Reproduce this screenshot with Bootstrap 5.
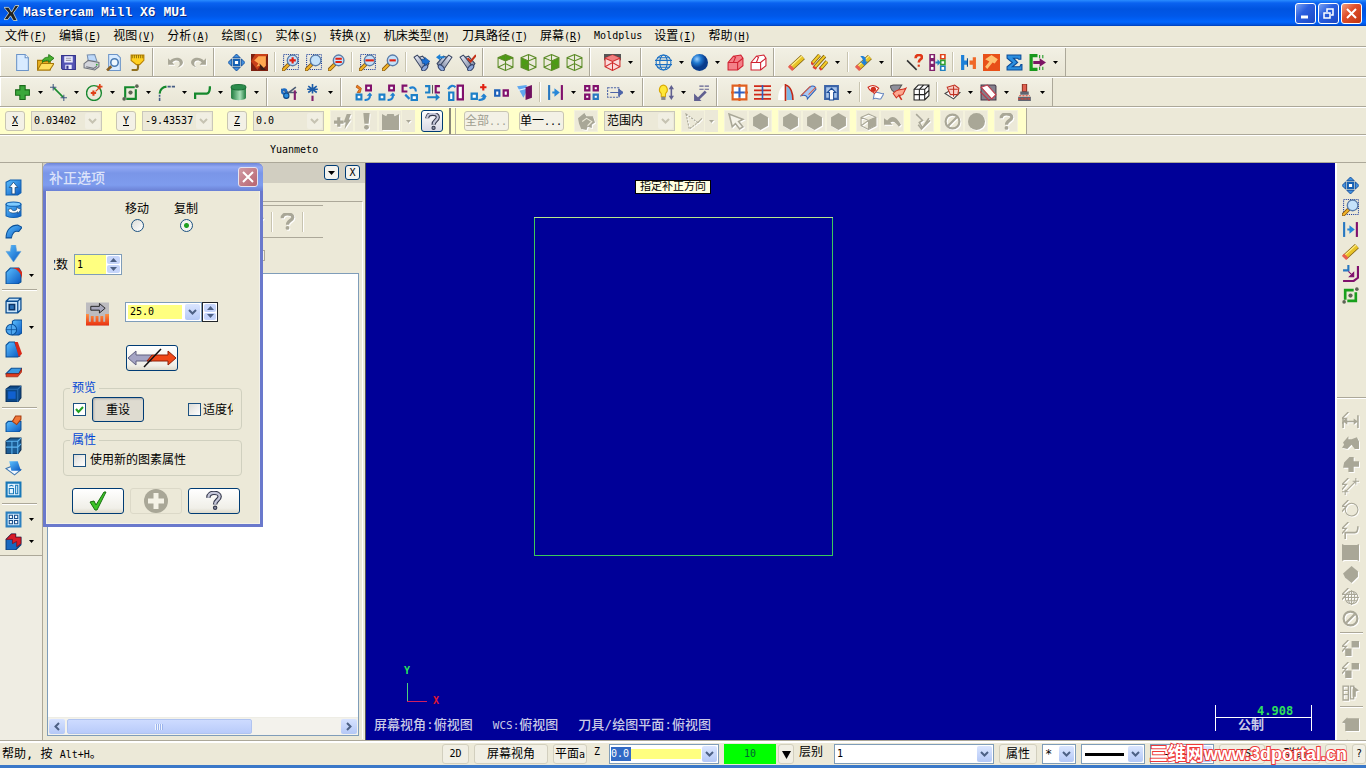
<!DOCTYPE html>
<html lang="zh-CN">
<head>
<meta charset="utf-8">
<meta name="viewport" content="width=device-width, initial-scale=1">
<title>Mastercam Mill X6 MU1</title>
<link href="https://cdn.jsdelivr.net/npm/bootstrap@5.3.0/dist/css/bootstrap.min.css" rel="stylesheet">
<style>
:root { --face:#ece9d8; --shade:#aca899; --ink:#000; --xp:#7f9db9; }
body { font-family:"DejaVu Sans Mono","Noto Sans CJK SC",monospace; font-size:12px; line-height:16px; color:#000; background:var(--face); }
.en { font-size:10px; }
button, input, select { font:inherit; color:inherit; }
button { padding:0; border:0; background:none; }
.titlebar { height:26px; background:linear-gradient(#2a8cff 0,#0a62f0 3px,#0054e0 9px,#0058ea 16px,#0066ff 22px,#0050d8 25px,#003cb0); color:#fff; }
.titlebar h1 { font:bold 13px/20px "Liberation Mono",monospace; text-shadow:1px 1px 0 #0a2a80; }
.titlebar .wins { gap:2px; }
.winbtn { width:21px; height:21px; border:1px solid #fff; border-radius:3px; background:linear-gradient(135deg,#7ba2f2,#2a5fe0 40%,#1c48c4); }
.winbtn.shut { background:linear-gradient(135deg,#f0a080,#e0502c 40%,#c03410); }
.winbtn svg, .x-shut svg { display:block; margin:auto; }
.menus { height:21px; padding-left:5px; gap:12px; border-bottom:1px solid var(--shade); }
.menus a { color:#000; text-decoration:none; white-space:nowrap; line-height:20px; display:block; }
.bar { border-top:1px solid #fff; border-bottom:1px solid var(--shade); height:30px; }
.tgroup { display:flex; align-items:center; border-left:1px solid #fff; border-right:1px solid var(--shade); padding:0 3px 0 10px; background:linear-gradient(#f2f0e4,#e8e5d4); }
.tb { width:23px; height:22px; flex:none; display:flex; align-items:center; justify-content:center; }
.tb svg { width:17px; height:17px; display:block; }
.cr { width:13px; height:22px; flex:none; display:flex; align-items:center; justify-content:center; }
.cr svg { width:5px; height:3px; }
.sp { width:8px; height:20px; flex:none; background:linear-gradient(90deg,transparent 3px,#c8c4b0 3px,#c8c4b0 4px,#fff 4px,#fff 5px,transparent 5px); }
.dis svg { color:#a9a797; filter:drop-shadow(1px 1px 0 #fff); }
.coords { height:28px; border-top:1px solid #fff; border-bottom:1px solid var(--shade); }
.ribbon { background:#ffffca; gap:14px; padding:0 8px 0 5px; border-right:1px solid var(--shade); }
.ribbon .segm { display:flex; gap:6px; align-items:center; }
.ribbon .seq { display:flex; }
.ribbon .tb { width:24px; background:var(--face); border:1px solid #f4f2dc; }
.ribbon .cr { background:var(--face); }
.ribbon .tb.lit { width:22px; background:linear-gradient(#fff,#d8d8e4); border:1px solid #003c74; border-radius:3px; }
.ribbon .split { width:7px; align-self:stretch; border-left:2px solid #8a887a; border-right:1px solid #b8b6a4; margin:0 -6px 0 -8px; }
.key { width:20px; height:20px; border:1px solid #c8c5b2; border-radius:3px; background:#f3f1e6; text-decoration:underline; font-size:10px; line-height:16px; }
.pick { width:45px; height:20px; border:1px solid #c8c5b2; border-radius:3px; background:#f3f1e6; text-align:left; white-space:nowrap; line-height:18px; }
.pick.dim { color:#a09e90; }
.combo { display:flex; height:20px; background:#fff; border:1px solid var(--xp); }
.combo input, .combo select { border:0; outline:0; background:none; min-width:0; width:20px; flex:1; padding:0 0 0 2px; appearance:none; border-radius:0; }
.combo input { font-size:10px; }
.combo input.yellow, .combo .yellow { background:#ffff80; }
.combo .drop { width:15px; margin:1px; border-radius:2px; background:linear-gradient(#dbe6ff,#b4c8f6); display:flex; align-items:center; justify-content:center; flex:none; }
.combo svg { width:9px; height:6px; color:#4d6185; }
.combo.off { background:var(--face); border-color:#c9c7ba; width:71px; }
.combo.off .drop { background:#f1efe3; }
.combo.off svg { color:#c6c3b2; }
.prompt { height:28px; border-top:1px solid #fff; border-bottom:1px solid var(--shade); padding-left:270px; line-height:26px; }
.stage { min-height:0; overflow:hidden; }
.rail { flex:none; border-right:1px solid var(--shade); display:flex; flex-direction:column; overflow:hidden; }
.rail .run { display:flex; align-items:center; height:22px; flex:none; }
.rail hr { margin:3px 0; height:0; border:0; border-top:1px solid var(--shade); border-bottom:1px solid #fff; opacity:1; flex:none; }
.rail.west { width:43px; background:#efede3; }
.rail.west .inner { padding:13px 5px 3px 2px; border-bottom:1px solid var(--shade); background:var(--face); }
.rail.east { width:31px; border:0; border-left:2px solid #fff; padding:11px 0 0 0; }
.rail.east .tb { width:26px; }
.rail.east hr { margin:3px 3px; }
.rail.east hr.brk { margin:91px 0 10px 0; }
.manager { width:323px; flex:none; border-right:1px solid #555; padding:0 2px 2px 3px; }
.manager .cap { height:20px; background:#d1cec1; margin:0 -2px 0 -3px; padding:2px 5px 0; gap:6px; }
.capbtn { width:15px; height:15px; border:1px solid #003c74; border-radius:3px; background:#f4f3ee; display:flex; align-items:center; justify-content:center; font-size:10px; line-height:12px; }
.sheet { margin-top:18px; border-top:1px solid var(--shade); border-right:1px solid #fff; padding:3px 3px 3px 1px; min-height:0; }
.strip { height:33px; width:276px; border-top:1px solid var(--shade); border-bottom:1px solid var(--shade); }
.slot { height:11px; width:218px; margin-top:12px; border:1px solid var(--shade); background:#f4f2e8; }
.tree { margin-top:12px; background:#fff; border:1px solid var(--xp); min-height:0; }
.sbar { height:18px; background:#f3f2ec; padding:1px; gap:2px; border-top:1px solid #eeede5; }
.sbar button { width:16px; border-radius:2px; background:linear-gradient(#d6e2ff,#b4c8f6); }
.sbar svg { width:6px; height:9px; display:block; margin:auto; color:#4d6185; }
.sbar .thumb { width:60%; background:linear-gradient(#cddbff,#b9cbfa); border:1px solid #b0c4f0; border-radius:2px; display:flex; align-items:center; justify-content:center; }
.sbar .grip { width:8px; height:6px; background:repeating-linear-gradient(90deg,#eef4ff 0 1px,#9cb4ec 1px 2px); }
.view { background:#000098; color:#c9c9e6; }
.view .sketch { position:absolute; inset:0; width:100%; height:100%; }
.hint { position:absolute; left:269px; top:17px; background:#ffffe1; color:#000; border:1px solid #000; font-size:11px; line-height:12px; padding:0 4px; }
.camera { position:absolute; left:8px; bottom:7px; font-size:13px; font-weight:500; white-space:nowrap; gap:20px; }
.camera .en { font-size:11px; }
.scalebar { position:absolute; right:23px; bottom:9px; width:97px; font-weight:700; }
.scalebar .num { color:#2fe05a; font:bold 12px/12px "DejaVu Sans Mono",monospace; padding-left:42px; }
.scalebar .unit { border-top:1px solid #fff; padding-left:23px; line-height:14px; font-size:13px; }
.scalebar::before, .scalebar::after { content:""; position:absolute; top:0; bottom:1px; width:1px; background:#fff; }
.scalebar::before { left:0; } .scalebar::after { right:0; }
.dlg { position:absolute; left:0; top:0; width:220px; background:var(--face); border:3px solid #6a79cc; border-top:0; border-radius:6px 6px 0 0; z-index:5; box-shadow:inset 0 0 0 1px #f4f2e8; }
.dlg header { height:28px; margin:0 -3px; padding:0 5px 0 6px; border-radius:6px 6px 0 0; background:linear-gradient(#6b83d8,#93a9f4 4px,#7a96e8 10px,#7e9cee 22px,#6a80d4); color:#dbe2fa; }
.dlg h2 { font:500 14px/27px "Noto Sans CJK SC",sans-serif; margin:0; }
.x-shut { width:20px; height:20px; border:1px solid #e6e2ef; border-radius:3px; background:linear-gradient(135deg,#d09aa4,#b86470); }
.dlg input[type=radio], .dlg input[type=checkbox] { appearance:none; width:13px; height:13px; border:1px solid #1c5180; background:linear-gradient(135deg,#dcdcd7,#fff); margin:0; flex:none; }
.dlg input[type=radio] { border-radius:50%; }
.dlg input[type=radio]:checked { background:radial-gradient(circle,#21a121 0 2px,#f4f4f0 3px); }
.dlg input[type=checkbox]:checked { background:#fff url("data:image/svg+xml,%3Csvg xmlns='http://www.w3.org/2000/svg' viewBox='0 0 11 11'%3E%3Cpath d='M2 5l2.500 3L9 3' fill='none' stroke='%2321a121' stroke-width='2'/%3E%3C/svg%3E"); }
.modes { padding:10px 0 0 79px; gap:25px; }
.modes label { display:flex; flex-direction:column; align-items:center; gap:2px; }
.times { margin:22px 0 0 8px; gap:6px; }
.times label { width:14px; overflow:hidden; display:flex; justify-content:flex-end; }
.times label span { flex:none; white-space:nowrap; }
.times .combo { width:48px; height:21px; }
.spin { display:flex; flex-direction:column; width:15px; gap:1px; padding:1px; flex:none; }
.spin button { flex:1; background:#c6d5fa; border-radius:2px; line-height:0; }
.spin svg { width:7px; height:4px; color:#4d6185; }
.off-row { margin:27px 0 0 40px; padding-right:42px; }
.off-row .dist { width:77px; flex:none; }
.dist .yellow { margin:2px; }
.off-row .dspin { width:16px; }
.dspin .spin { width:14px; }
.push { width:52px; height:26px; border:1px solid #003c74; border-radius:3px; background:linear-gradient(#fff,#f0efe8 80%,#dedacb); display:flex; align-items:center; justify-content:center; }
.push.flat { border-color:#dcd9c8; background:var(--face); color:#a9a797; }
.flip { margin:19px 0 10px 80px; }
.dlg fieldset { border:1px solid #d0d0bf; border-radius:4px; margin:0 18px 0 17px; padding:0 8px 0 9px; }
.dlg legend { float:none; width:auto; margin:0 0 0 -3px; padding:0 3px 0 2px; font-size:12px; line-height:14px; color:#0046d5; }
.dlg .fs1 { height:49px; }
.dlg .fs2 { height:43px; margin-top:3px; }
.fs1 > div { margin-top:2px; }
.fs2 > label { margin-top:5px; }
.push.reset { margin-left:6px; background:#dedbd0; box-shadow:inset 1px 1px 2px #aaa; height:25px; }
.fitlb { width:45px; overflow:hidden; white-space:nowrap; }
.fitlb span { padding-left:2px; }
.acts { gap:6px; margin:12px 0 10px 26px; }
.foot { border-top:2px solid #fff; border-bottom:3px solid #3a78c8; box-shadow:0 -1px 0 var(--shade); height:27px; white-space:nowrap; }
.foot .tip { padding-left:2px; }
.foot .cell { height:20px; border:1px solid #d2cfbe; border-radius:3px; background:#f1efe4; line-height:18px; overflow:hidden; text-align:center; }
.state { gap:5px; height:20px; }
.w2d { width:27px; } .wview { width:74px; } .wplane { width:34px; } .wz { width:12px; padding-left:2px; }
.wdepth { width:110px; }
.combo input.sel { flex:none; width:20px; background:#316ac5; color:#fff; margin:2px 0 2px 1px; padding:0; }
.wcol { width:52px; background:#0f0; color:#063; } .wcr { width:16px; margin-left:-3px; }
.wlev { width:30px; } .wlevel { width:160px; }
.watt { width:38px; } .wpt { width:34px; } .wln { width:64px; align-items:center; }
.combo.wpt input { font-size:12px; }
.wln .drop { align-self:stretch; }
.stroke3, .stroke1 { flex:1; margin:0 3px; height:3px; background:#000; } .stroke1 { height:1px; }
.wwcs { width:46px; } .wgrp { width:50px; } .wq2 { width:22px; } .wq { width:14px; }
.site-url { position:absolute; right:19px; bottom:0; font:bold 18px/22px "Liberation Sans","Noto Sans CJK SC",sans-serif; color:#fff; -webkit-text-stroke:2px #ee3a3a; paint-order:stroke fill; text-decoration:none; }
</style>
</head>
<body class="vh-100 d-flex flex-column overflow-hidden">

<svg width="0" height="0" class="position-absolute" aria-hidden="true">
<defs>
<linearGradient id="gb" x2="1" y2="1"><stop stop-color="#5cc0ff"/><stop offset="1" stop-color="#0a58c0"/></linearGradient>
<radialGradient id="gs" cx=".35" cy=".3"><stop stop-color="#9cd0ff"/><stop offset=".5" stop-color="#2078d0"/><stop offset="1" stop-color="#0a3c8c"/></radialGradient>
<linearGradient id="gg"><stop stop-color="#1c7a3c"/><stop offset=".6" stop-color="#a8e0b8"/><stop offset="1" stop-color="#1c7a3c"/></linearGradient>
<linearGradient id="gm" x2="1" y2="1"><stop stop-color="#f4f6ff"/><stop offset="1" stop-color="#6c7896"/></linearGradient>
<linearGradient id="gr" x2="0" y2="1"><stop stop-color="#ff9040"/><stop offset="1" stop-color="#e83010"/></linearGradient>
</defs>
<symbol id="caret" viewBox="0 0 5 3"><path d="M0 0h5L2.500 3z" fill="currentColor"/></symbol>
<symbol id="chev" viewBox="0 0 9 6"><path d="M1 1l3.500 3.500L8 1" fill="none" stroke="currentColor" stroke-width="2"/></symbol>
<symbol id="up" viewBox="0 0 7 4"><path d="M0 4h7L3.500 0z" fill="currentColor"/></symbol>
<symbol id="dn" viewBox="0 0 7 4"><path d="M0 0h7L3.500 4z" fill="currentColor"/></symbol>
<symbol id="lens" viewBox="0 0 16 16"><path d="M1.500 14.500l4.500-4.500" stroke="#8a5a10" stroke-width="3.500" stroke-linecap="round"/><path d="M1.500 14.500l4-4" stroke="#f0b428" stroke-width="2" stroke-linecap="round"/><circle cx="10" cy="6" r="5" fill="#c4e2fa" stroke="#5a7ca8" stroke-width="1.300"/></symbol>
<symbol id="new" viewBox="0 0 16 16"><path d="M2.500.5h8l3 3v12h-11z" fill="#d8ebff" stroke="#6c94c8"/><path d="M10.500.5v3h3" fill="#fff" stroke="#6c94c8"/></symbol>
<symbol id="open" viewBox="0 0 16 16"><path d="M.5 15V6h5l1 1h6v8z" fill="#e8b020" stroke="#a87808"/><path d="M.5 15L4 9h12l-4 6z" fill="#ffe060" stroke="#a87808"/><path d="M5 8c0-4 3-5 6-5V.5L16 4l-5 4V6C9 6 7 6 5 8z" fill="#48b030" stroke="#1c7010" stroke-width=".8"/></symbol>
<symbol id="save" viewBox="0 0 16 16"><path d="M1.500 1.500h13v13h-12l-1-1z" fill="#5454b4" stroke="#34348c"/><path d="M4 2h8v6H4zM5 10h6v4H5z" fill="#eef"/><path d="M5.500 4h5M5.500 6h5" stroke="#99a"/><path d="M6 11h2v3H6z" fill="#34348c"/></symbol>
<symbol id="print" viewBox="0 0 16 16"><path d="M5 7L4 1l7-.5 2 6z" fill="#bcd8fa" stroke="#7890b0"/><path d="M1 9l4-3 10 2v4l-4 3-10-2z" fill="#d4d6dc" stroke="#70747c"/><path d="M3 12l7 1.500 3-2" stroke="#70747c" fill="none"/><circle cx="13" cy="10" r=".8" fill="#2a2"/></symbol>
<symbol id="preview" viewBox="0 0 16 16"><path d="M2.500.5h8l3 3v12h-11z" fill="#d8ebff" stroke="#6c94c8"/><circle cx="8" cy="8" r="3.500" fill="#eef8ff" stroke="#4c7cb4" stroke-width="1.500"/><path d="M1 15.500l4-4" stroke="#8a6020" stroke-width="2.500"/></symbol>
<symbol id="config" viewBox="0 0 16 16"><path d="M2 1h12v5l-4 4H7L2 6z" fill="#ffd020" stroke="#b88000"/><path d="M3 1v3M5 1v3M7 1v3M9 1v3M11 1v3M13 1v3" stroke="#806000" stroke-width=".8"/><path d="M8.500 10v3c0 3-3 2-6 2" stroke="#907020" stroke-width="2" fill="none"/></symbol>
<symbol id="undo" viewBox="0 0 16 16"><path d="M1 4v6h6L5 8c3-3 7-2 7 1 0 2-1 3-3 4 4-1 6-3 6-5 0-5-8-6-12-2z" fill="currentColor"/></symbol>
<symbol id="redo" viewBox="0 0 16 16"><path d="M15 4v6H9l2-2C8 5 4 6 4 9c0 2 1 3 3 4-4-1-6-3-6-5 0-5 8-6 12-2z" fill="currentColor"/></symbol>
<symbol id="fit" viewBox="0 0 16 16"><path d="M8 0l3.500 3.500h-7zM8 16l3.500-3.500h-7zM0 8l3.500-3.500v7zM16 8l-3.500-3.500v7z" fill="#4090e0" stroke="#0a4494" stroke-width=".8"/><path d="M5.500 5.500h5v5h-5z" fill="#fff" stroke="#1460b4" stroke-width="2"/></symbol>
<symbol id="repaint" viewBox="0 0 16 16"><path d="M0 0h16v16H0z" fill="#7c2010"/><path d="M0 7L4 0h12L6 15z" fill="#c84018"/><path d="M3 6l4-4 7 0v9l-3 3-3-3-3 1 2-3z" fill="#ffa850"/><path d="M8 9l6 6h-5z" fill="#3c1c14"/></symbol>
<symbol id="zwin" viewBox="0 0 16 16"><path d="M1.500.5h14v14h-14z" fill="none" stroke="#1a3c9c" stroke-dasharray="1 1"/><use href="#lens"/><path d="M10 3v6M7 6h6" stroke="#e02010" stroke-width="2"/></symbol>
<symbol id="ztgt" viewBox="0 0 16 16"><path d="M1.500.5h14v14h-14z" fill="none" stroke="#1a3c9c" stroke-dasharray="1 1"/><use href="#lens"/></symbol>
<symbol id="zeq" viewBox="0 0 16 16"><use href="#lens"/><path d="M7 4.500h6M7 7.500h6" stroke="#e02010" stroke-width="2"/></symbol>
<symbol id="zhalf" viewBox="0 0 16 16"><path d="M1.500.5h14v14h-14z" fill="none" stroke="#1a3c9c" stroke-dasharray="1 1"/><use href="#lens"/><path d="M6 6h8" stroke="#e02010" stroke-width="2"/></symbol>
<symbol id="zout" viewBox="0 0 16 16"><use href="#lens"/><path d="M7 6h6" stroke="#e02010" stroke-width="2"/></symbol>
<symbol id="binocle" viewBox="0 0 16 16"><path d="M1 3l3-2 9 9-4 5z" fill="url(#gm)" stroke="#3c4864"/><path d="M6 3l3-1 6 7-2 3z" fill="url(#gm)" stroke="#3c4864"/><ellipse cx="11" cy="13" rx="3.500" ry="2" transform="rotate(-45 11 13)" fill="#8ca8dc" stroke="#34446c"/></symbol>
<symbol id="bin1" viewBox="0 0 16 16"><use href="#binocle"/><path d="M8 5h3V3l5 4-5 4V9H9z" fill="#1c70d4" stroke="#0a3c80" stroke-width=".5"/></symbol>
<symbol id="bin2" viewBox="0 0 16 16"><g transform="matrix(-1 0 0 1 16 0)"><use href="#binocle"/></g><path d="M0 3l4-3v2h4v2H4v2z" fill="#1c80d4"/></symbol>
<symbol id="bin3" viewBox="0 0 16 16"><use href="#binocle"/><path d="M8 4l3 3 5-6" fill="none" stroke="#c43018" stroke-width="2"/></symbol>
<symbol id="cubew" viewBox="0 0 16 16"><path d="M8 .5l7 3v9l-7 3-7-3v-9zM1 3.500l7 3 7-3M8 6.500v9M8 .5V9M1 12.500L8 9l7 3.500" fill="none" stroke="#5c8c28"/></symbol>
<symbol id="cubet" viewBox="0 0 16 16"><path d="M8 .5l7 3-7 3-7-3z" fill="#4c9c14"/><use href="#cubew"/></symbol>
<symbol id="cubef" viewBox="0 0 16 16"><path d="M1 3.500l7 3v9l-7-3z" fill="#4c9c14"/><use href="#cubew"/></symbol>
<symbol id="cubes" viewBox="0 0 16 16"><path d="M15 3.500l-7 3v9l7-3z" fill="#4c9c14"/><use href="#cubew"/></symbol>
<symbol id="cuber" viewBox="0 0 16 16"><path d="M0 0h16v6H0z" fill="#555"/><path d="M8 1l7 3v8l-7 3.500L1 12V4z" fill="#fbdcdc" stroke="#d02c2c"/><path d="M8 1l7 3-7 3-7-3z" fill="#f08080"/><path d="M1 4l7 3 7-3M8 7v8M1 12l7-4 7 4" fill="none" stroke="#d02c2c"/></symbol>
<symbol id="globe" viewBox="0 0 16 16"><g fill="none" stroke="#1c70c4"><circle cx="8" cy="8" r="7"/><ellipse cx="8" cy="8" rx="3.500" ry="7"/><path d="M0 6h16M0 10h16M2 3.500h12M2 12.500h12"/></g></symbol>
<symbol id="ball" viewBox="0 0 16 16"><circle cx="8" cy="8" r="8" fill="url(#gs)"/></symbol>
<symbol id="rbox" viewBox="0 0 16 16"><path d="M1 8l5-6 7-1 2 3v7l-5 4H1z" fill="#f48088" stroke="#d02030"/><path d="M1 8h9l5-4M10 8v7M6 2l2 1-2 5" fill="none" stroke="#d02030"/></symbol>
<symbol id="rboxw" viewBox="0 0 16 16"><path d="M1 8l5-6 7-1 2 3v7l-5 4H1z" fill="#fff" stroke="#d02030"/><path d="M1 8h9l5-4M10 8v7M6 2l2 1-2 5" fill="none" stroke="#d02030"/></symbol>
<symbol id="erase" viewBox="0 0 16 16"><path d="M3 13L14 3" stroke="#806010" stroke-width="5.500"/><path d="M3 13L14 3" stroke="#e8c428" stroke-width="4"/><path d="M2 12l11-10" stroke="#fff090" stroke-width="1"/><path d="M1 11l4 4" stroke="#e86050" stroke-width="3"/></symbol>
<symbol id="erase2" viewBox="0 0 16 16"><path d="M1 9l7-8M3 13L13 2M9 14l6-7" stroke="#806010" stroke-width="3.500"/><path d="M1 9l7-8M3 13L13 2M9 14l6-7" stroke="#f4cc28" stroke-width="2"/><path d="M0 8l2 2M2 12l3 2M8 13l2 2" stroke="#e04030" stroke-width="2"/></symbol>
<symbol id="erase3" viewBox="0 0 16 16"><use href="#erase"/><path d="M5 2c4-1 6 2 5 5h2l-3 4-4-4h2c1-2 0-3-2-5z" fill="#2080d8"/></symbol>
<symbol id="anlz" viewBox="0 0 16 16"><path d="M1 6l9 9" stroke="#333" stroke-width="1.500"/><path d="M9 4c0-4 6-4 6-1 0 2-3 2-3 5" fill="none" stroke="#e03818" stroke-width="2.500"/><path d="M11 10h2v2h-2z" fill="#e03818"/></symbol>
<symbol id="diff" viewBox="0 0 16 16"><path d="M1 .5h4v4H1zM1 6h4v4H1zM1 11.500h4v4H1z" fill="#fff" stroke="#80206c" stroke-width="1.500"/><path d="M11 .5h4v4h-4z" fill="#fff" stroke="#e04018" stroke-width="1.500"/><path d="M11 6h4v4h-4z" fill="#fff" stroke="#30a030" stroke-width="1.500"/><path d="M11 11.500h4v4h-4z" fill="#fff" stroke="#2080c0" stroke-width="1.500"/><path d="M6 7h2V5l3 3-3 3V9H6z" fill="#2080c0"/></symbol>
<symbol id="joint" viewBox="0 0 16 16"><path d="M1 1h3v5h3v4H4v5H1z" fill="#1c80d8"/><path d="M15 3h-3v3H9v4h3v4h3z" fill="#f06828"/><path d="M7 4v8" stroke="#0a4c90"/></symbol>
<symbol id="hammer" viewBox="0 0 16 16"><path d="M0 0h16v16H0z" fill="#e85018"/><path d="M2 5l6-4 6 4-3 4-2-1-5 6-2-2 4-5z" fill="#ffc070"/></symbol>
<symbol id="sigma" viewBox="0 0 16 16"><path d="M1 1h13v4h-2l-1-1H7l4 4-5 4h7l1-2h1v5H1v-3l5-4-5-4z" fill="#2c90e0" stroke="#0a4c98"/></symbol>
<symbol id="port" viewBox="0 0 16 16"><path d="M8 1.500H2v13h6" fill="none" stroke="#18981c" stroke-width="3"/><path d="M10 1v3M13 1v3M10 12v3M13 12v3" stroke="#18981c"/><path d="M4 6.500h6V4l6 4-6 4V9.500H4z" fill="#7c1464"/></symbol>
<symbol id="plus" viewBox="0 0 16 16"><path d="M5.500 1.500h5v4h4v5h-4v4h-5v-4h-4v-5h4z" fill="#3ca83c" stroke="#1c6c1c"/></symbol>
<symbol id="line" viewBox="0 0 16 16"><path d="M3 3l10 10" stroke="#1c8c30" stroke-width="1.500"/><path d="M3 0v6M0 3h6M13 10v6M10 13h6" stroke="#445c84"/></symbol>
<symbol id="arc" viewBox="0 0 16 16"><circle cx="7.500" cy="8.500" r="7" fill="none" stroke="#188830" stroke-width="1.300"/><path d="M7 6v5M4.500 8.500h5" stroke="#e04018" stroke-width="2"/><path d="M13 0v5M10.500 2.500h5" stroke="#e04018" stroke-width="1.500"/><path d="M9 7l3-3" stroke="#e04018"/></symbol>
<symbol id="rect" viewBox="0 0 16 16"><path d="M12 3H3v10M4 14h9V5" fill="none" stroke="#14882c" stroke-width="2"/><g fill="#5c6454"><circle cx="2" cy="14" r="1.700"/><circle cx="14" cy="2" r="1.700"/><circle cx="8" cy="8" r="2"/></g></symbol>
<symbol id="fillet" viewBox="0 0 16 16"><path d="M1.500 16V10" stroke="#445c84" stroke-width="1.500" stroke-dasharray="3 1"/><path d="M1.500 9C2 5 4 3 8 2.500" fill="none" stroke="#14882c" stroke-width="2"/><path d="M9 2.500h7" stroke="#445c84" stroke-width="1.500" stroke-dasharray="3 1"/></symbol>
<symbol id="spline" viewBox="0 0 16 16"><path d="M1 14V9h11c2 0 3-2 3-7" fill="none" stroke="#14882c" stroke-width="2.200"/></symbol>
<symbol id="cyl" viewBox="0 0 16 16"><path d="M1 3v10c0 3 14 3 14 0V3z" fill="url(#gg)"/><ellipse cx="8" cy="3" rx="7" ry="2.500" fill="#2c8c4c" stroke="#1c7038"/></symbol>
<symbol id="trim" viewBox="0 0 16 16"><path d="M0 5l7 3M6 9l8-6M7 8h8" fill="none" stroke="#4c5c74" stroke-width="1.500"/><circle cx="3" cy="7" r="2" fill="none" stroke="#1c6cc4" stroke-width="2"/><circle cx="5" cy="11" r="2.500" fill="#2c90e0" stroke="#0a4484"/><path d="M13 6v9" stroke="#80206c" stroke-width="2"/></symbol>
<symbol id="brk" viewBox="0 0 16 16"><path d="M8 0v9M4 2l8 6M12 2L4 8M3 5h10" stroke="#1c5ca8" stroke-width="1.500"/><path d="M8 11v5" stroke="#80206c" stroke-width="2"/></symbol>
<symbol id="xf" viewBox="0 0 16 16"><path d="M1.500 10h4.500v4.500H1.500z" fill="#fff" stroke="#1c80c8" stroke-width="2"/><path d="M10.500 1.500h4.500V6h-4.500z" fill="#fff" stroke="#80106c" stroke-width="2"/><path d="M9 14c3 0 4-1 4-3h-2l3-3 2.500 3H15c0 4-3 5-6 5z" fill="#2080d0"/></symbol>
<symbol id="xf1" viewBox="0 0 16 16"><use href="#xf"/><path d="M2 1l4 3-1 4H2l2-3-3-2z" fill="#f08020" stroke="#a04000" stroke-width=".6"/></symbol>
<symbol id="xf2" viewBox="0 0 16 16"><path d="M6 1.500H1.500V7H6" fill="none" stroke="#80106c" stroke-width="2"/><path d="M10 10.500h5V15h-5z" fill="#fff" stroke="#1c80c8" stroke-width="2"/><path d="M8 4c4-2 6 0 6 3M4 10l4 4" stroke="#2080d0" stroke-width="2" fill="none"/></symbol>
<symbol id="xf3" viewBox="0 0 16 16"><path d="M15 2h-4v6h4" fill="none" stroke="#80106c" stroke-width="2"/><path d="M1 2h4v6H1M3 12.500h9" fill="none" stroke="#1c80c8" stroke-width="2"/><path d="M11 9l4 3.500-4 3.500z" fill="#1c80c8"/><path d="M8 1v8" stroke="#555"/></symbol>
<symbol id="xf4" viewBox="0 0 16 16"><path d="M10 1.500h5v13h-5z" fill="#fff" stroke="#80106c" stroke-width="2"/><path d="M2 8h4v7H2z" fill="#fff" stroke="#1c80c8" stroke-width="2"/><path d="M1 5c2-4 5-4 7-2" stroke="#2080d0" stroke-width="2" fill="none"/></symbol>
<symbol id="xf5" viewBox="0 0 16 16"><path d="M1.500 9h5v5h-5z" fill="#fff" stroke="#1c80c8" stroke-width="2"/><path d="M12.500 0v6M9.500 3h6" stroke="#e02010" stroke-width="2"/><path d="M8 14c3 0 4-1 4-2h-2l3-3 3 3h-1c0 3-3 4-7 4z" fill="#2080d0"/></symbol>
<symbol id="xf6" viewBox="0 0 16 16"><path d="M2 6h4v5H2z" fill="#fff" stroke="#1c60b8" stroke-width="2"/><path d="M10 6h4v5h-4z" fill="#fff" stroke="#80106c" stroke-width="2"/></symbol>
<symbol id="xf7" viewBox="0 0 16 16"><path d="M1 2l9-1v6L7 13z" fill="#60a8f0"/><path d="M2 6l8-2" stroke="#e4f0ff"/><path d="M9 3l6-2v12l-6 2z" fill="#701060"/></symbol>
<symbol id="dyn" viewBox="0 0 16 16"><path d="M2 1v14" stroke="#2878c0" stroke-width="2"/><path d="M14 1v14" stroke="#80106c" stroke-width="2"/><path d="M5 7h2V4l5 4-5 4V9H5z" fill="#2888d8"/></symbol>
<symbol id="arr" viewBox="0 0 16 16"><path d="M2 2h4v4H2zM10 2h4v4h-4zM2 10h4v4H2z" fill="#fff" stroke="#80106c" stroke-width="2"/><path d="M10 10h4v4h-4z" fill="#fff" stroke="#2878c0" stroke-width="2"/></symbol>
<symbol id="mov" viewBox="0 0 16 16"><path d="M1.500 3.500h11v9h-11z" fill="none" stroke="#4c64a8" stroke-dasharray="2 1"/><path d="M4 8h8M12 5l4 3-4 3z" fill="#4c64a8" stroke="#4c64a8"/></symbol>
<symbol id="bulb" viewBox="0 0 16 16"><path d="M6 1a4.500 4.500 0 0 1 2 8v3H4V9a4.500 4.500 0 0 1 2-8z" fill="#ffe838" stroke="#d8a800"/><path d="M4 12h4v3H4z" fill="#888"/><path d="M13.500 3v10" stroke="#606090" stroke-width="1.500"/><path d="M11 5l2.500-4L16 5zM11 11l2.500 4 2.500-4z" fill="#606090"/></symbol>
<symbol id="note" viewBox="0 0 16 16"><path d="M6 2h10M6 5h10" stroke="#606090" stroke-dasharray="4 1"/><path d="M12 7l-7 7" stroke="#606090" stroke-width="2.500"/><path d="M1 16V9l7 7z" fill="#606090"/></symbol>
<symbol id="gridr" viewBox="0 0 16 16"><path d="M1.500 1.500h13v13h-13z" fill="#fff" stroke="#e06020" stroke-width="2"/><path d="M8 3v10M3 8h10" stroke="#3060c0" stroke-width="2"/><path d="M8 0v3M8 13v3M0 8h3M13 8h3" stroke="#e06020" stroke-width="2"/></symbol>
<symbol id="flow" viewBox="0 0 16 16"><path d="M0 2h16M0 6h16M0 10h16M0 14h16" stroke="#d02818" stroke-width="1.500"/><path d="M8 1v14" stroke="#3060c0" stroke-width="1.500"/></symbol>
<symbol id="sail" viewBox="0 0 16 16"><path d="M7 1C2 4 1 9 1 15h6z" fill="#fff"/><path d="M9 1v14h6c0-6-2-11-6-14z" fill="#7cb8e8"/><path d="M8 0v16M8 1c5 1 7 8 7 14" fill="none" stroke="#c02818" stroke-width="1.500"/></symbol>
<symbol id="swept" viewBox="0 0 16 16"><path d="M1 11l8-8c3-2 6-1 6 2l-8 9c0-3-2-4-6-3z" fill="#a8c8f4" stroke="#2c60b8"/><path d="M1 11l9-9M8 10l7-7" stroke="#e06040"/></symbol>
<symbol id="pocket" viewBox="0 0 16 16"><path d="M2 2h12v12H2z" fill="#a8c4ea" stroke="#3c64a8" stroke-width="2"/><path d="M8 4l4 4h-2v7H6V8H4z" fill="#fff" stroke="#1c4c98"/></symbol>
<symbol id="surf1" viewBox="0 0 16 16"><path d="M7 8c4-1 6 2 9 1l-3 5c-2 1-4-2-7 0z" fill="#fff" stroke="#6888c0"/><path d="M1 3c3-2 7-2 10 1l-4 5c-2-3-4-1-6-6z" fill="#fff" stroke="#d03020"/><circle cx="6" cy="5" r="2.500" fill="#d03020"/></symbol>
<symbol id="surf2" viewBox="0 0 16 16"><path d="M0 2l3-1h8l-5 8-4-3z" fill="#90909c" stroke="#555"/><path d="M3 9c3-5 8-3 12-5l-3 6c-2 1-4 0-6 3z" fill="#fca890" stroke="#d03020"/><path d="M8 10l3 5" stroke="#d03020" stroke-width="1.500"/></symbol>
<symbol id="box" viewBox="0 0 16 16"><path d="M1 5l4-4h10v10l-4 4H1zM1 5h10v10M11 5l4-4M6 5v10M1 10h10l4-4M10 1L6 5" fill="#fff" stroke="#222" stroke-width="1"/></symbol>
<symbol id="surf3" viewBox="0 0 16 16"><path d="M1 9l5-3 9 2-6 6z" fill="#fff" stroke="#444"/><path d="M3 3l7-2 4 3-1 6H6z" fill="#f8d0c8" stroke="#c03020"/><path d="M5 5h8M9 2v10" stroke="#c03020"/></symbol>
<symbol id="blk" viewBox="0 0 16 16"><path d="M1 1h13l1 1v13H1z" fill="#84808c" stroke="#443848"/><path d="M1 3l6-2 8 9-4 4z" fill="#fff" stroke="#c03848"/><path d="M0 7l9 9" stroke="#c03848"/></symbol>
<symbol id="tool" viewBox="0 0 16 16"><path d="M6 0h4v7H6z" fill="#e06050" stroke="#903020"/><path d="M4 7h8v3H4zM2 12h12v4H2z" fill="#606470"/><path d="M3 11h10M2 14h12" stroke="#e04030" stroke-dasharray="2 1"/></symbol>
<symbol id="fast" viewBox="0 0 16 16"><path d="M0 7h3V4h3v3h3v3H6v3H3v-3H0zM12 1h4l-2 5h2l-6 9 1-6H9z" fill="currentColor"/></symbol>
<symbol id="bang" viewBox="0 0 16 16"><path d="M5 0h6l-1 10H6z" fill="currentColor"/><circle cx="8" cy="13.500" r="2.300" fill="currentColor"/></symbol>
<symbol id="blot" viewBox="0 0 16 16"><path d="M0 1l4 2 1-2h6l1 2 4-2v15H0z" fill="currentColor"/></symbol>
<symbol id="help" viewBox="0 0 16 16"><path d="M3 5c0-6 10-5 10-1 0 3-4 3-4 7" fill="none" stroke="#34384c" stroke-width="4"/><path d="M3 5c0-6 10-5 10-1 0 3-4 3-4 7" fill="none" stroke="#c4c6d8" stroke-width="2"/><circle cx="9" cy="14" r="1.500" fill="#888ca0" stroke="#34384c"/></symbol>
<symbol id="helpg" viewBox="0 0 16 16"><path d="M3 5c0-6 10-5 10-1 0 3-5 3-5 7" fill="none" stroke="currentColor" stroke-width="3"/><circle cx="8" cy="14" r="1.800" fill="currentColor"/></symbol>
<symbol id="swirl" viewBox="0 0 16 16"><path d="M0 5l6-5 2 3 6 0 2 6-3 2 0 3-4-1-1 3-5-1-2-5z" fill="currentColor"/><path d="M4 8l4-3 5 3-4 4" fill="none" stroke="#ece9d8"/></symbol>
<symbol id="dsel" viewBox="0 0 16 16"><path d="M1 1l3 14 8-6z" fill="none" stroke="currentColor" stroke-dasharray="2 1"/><path d="M12 9l4-4" stroke="currentColor"/></symbol>
<symbol id="ptr" viewBox="0 0 16 16"><path d="M1 1l3 12 3-3 4 5 3-2-4-5 4-2z" fill="#f4f2e8" stroke="currentColor" stroke-width="1.500"/></symbol>
<symbol id="hex" viewBox="0 0 16 16"><path d="M8 0l7 4v8l-7 4-7-4V4z" fill="currentColor"/></symbol>
<symbol id="clip" viewBox="0 0 16 16"><path d="M2 10L11 1l4 4-9 10z" fill="currentColor"/></symbol>
<symbol id="cubeg" viewBox="0 0 16 16"><path d="M8 1l7 3v8l-7 3.500L1 12V4zM1 4l7 3 7-3M8 7v8M1 12l7-5" fill="none" stroke="currentColor"/><path d="M8 7l7-3v8l-7 3z" fill="currentColor"/></symbol>
<symbol id="bend" viewBox="0 0 16 16"><path d="M0 11V5l3 2c5-6 9-3 13 4l-2 2c-3-4-5-6-8-4l2 2z" fill="currentColor"/></symbol>
<symbol id="okp" viewBox="0 0 16 16"><path d="M2 1l6 6-3 2 3 5 6-9M4 11l3 4 8-8" fill="none" stroke="currentColor" stroke-width="1.500"/></symbol>
<symbol id="no" viewBox="0 0 16 16"><circle cx="8" cy="8" r="6.500" fill="none" stroke="currentColor" stroke-width="2"/><path d="M4 12l8-8" stroke="currentColor" stroke-width="2"/></symbol>
<symbol id="disc" viewBox="0 0 16 16"><circle cx="8" cy="8" r="8" fill="currentColor"/></symbol>
<symbol id="bolt" viewBox="0 0 16 16"><path d="M6 0L0 6h4l-4 5" fill="none" stroke="currentColor" stroke-width="1.300"/></symbol>
<symbol id="e1" viewBox="0 0 16 16"><use href="#bolt"/><path d="M1 6v9M15 3v12M3 9h10" stroke="currentColor" stroke-width="1.500"/><path d="M1 9l4-3v6zM15 9l-4-3v6z" fill="currentColor"/></symbol>
<symbol id="e2" viewBox="0 0 16 16"><path d="M1 8l5-6 0 3 3 0 5-2 2 4v7h-4l-3-4-4 4-5-1 2-3z" fill="currentColor"/></symbol>
<symbol id="e3" viewBox="0 0 16 16"><path d="M2 6l5-5h4v4h5v5h-5v5H6v-4H1z" fill="currentColor"/></symbol>
<symbol id="e4" viewBox="0 0 16 16"><use href="#bolt"/><path d="M3 13L13 3M13 0v6M10 3h6M3 11v5M0 13h6" stroke="currentColor"/></symbol>
<symbol id="e5" viewBox="0 0 16 16"><use href="#bolt"/><circle cx="9" cy="9" r="6" fill="none" stroke="currentColor"/></symbol>
<symbol id="e6" viewBox="0 0 16 16"><use href="#bolt"/><path d="M3 16v-6h9c2 0 3-2 3-6" fill="none" stroke="currentColor" stroke-width="1.500"/></symbol>
<symbol id="e7" viewBox="0 0 16 16"><path d="M0 0l2 1h12l2-1v16l-2-1H2l-2 1z" fill="currentColor"/></symbol>
<symbol id="e8" viewBox="0 0 16 16"><path d="M1 7l8-7 6 5v5l-6 6-6-5z" fill="currentColor"/></symbol>
<symbol id="e9" viewBox="0 0 16 16"><use href="#bolt"/><g fill="none" stroke="currentColor"><circle cx="9" cy="9" r="6"/><ellipse cx="9" cy="9" rx="3" ry="6"/><path d="M2 9h14M9 2v14M4 6h10M4 12h10"/></g></symbol>
<symbol id="ea" viewBox="0 0 16 16"><use href="#bolt"/><path d="M9 1h7v6H9zM3 8h6v7H3z" fill="currentColor"/></symbol>
<symbol id="eb" viewBox="0 0 16 16"><path d="M1 2h5v13H1zM1 6h5M1 10h5M8 2h3v12H8z" fill="none" stroke="currentColor" stroke-width="1.300"/><path d="M10 12V5h1V2l5 4-3 1v5z" fill="currentColor"/></symbol>
<symbol id="ec" viewBox="0 0 16 16"><path d="M0 8l5-5v1h11v12H3V9z" fill="currentColor"/></symbol>
<symbol id="trimr" viewBox="0 0 16 16"><path d="M1 5h5V0" fill="none" stroke="#2878c0" stroke-width="2"/><path d="M1 15h10l4-3V1" fill="none" stroke="#80106c" stroke-width="2"/><path d="M6 6l4 4M11 7v4H7z" stroke="#80106c" fill="#80106c"/></symbol>
<symbol id="rectg" viewBox="0 0 16 16"><path d="M11 3H3v9M5 13h8V5" fill="none" stroke="#18a01c" stroke-width="2.500"/><g fill="#5c6454"><circle cx="2" cy="14" r="1.700"/><circle cx="14" cy="2" r="1.700"/><circle cx="8" cy="8" r="2"/></g></symbol>
<symbol id="s1" viewBox="0 0 16 16"><path d="M1 3l4-2h10v12l-3 2H1z" fill="url(#gb)" stroke="#1060b0"/><path d="M8 3l4 5H9.500v6h-3V8H4z" fill="#fff" stroke="#104070" stroke-width=".7"/></symbol>
<symbol id="s2" viewBox="0 0 16 16"><path d="M1 3v11c3 2 11 2 14 0V3z" fill="url(#gb)" stroke="#1060b0"/><ellipse cx="8" cy="3" rx="7" ry="2" fill="#80ccff" stroke="#1060b0"/><path d="M3 8c0 4 7 4 9 2v2l3-4-4-2v2C9 10 6 9 6 7z" fill="#fff" stroke="#104070" stroke-width=".6"/></symbol>
<symbol id="s3" viewBox="0 0 16 16"><path d="M1 14C1 6 6 2 12 2l4 2-3 4C9 7 7 9 6 14z" fill="url(#gb)" stroke="#0a5098"/></symbol>
<symbol id="s4" viewBox="0 0 16 16"><path d="M6 0h4l1 6h4l-7 10-7-10h4z" fill="url(#gb)" stroke="#60a0d8" stroke-width=".6"/></symbol>
<symbol id="s5" viewBox="0 0 16 16"><path d="M1 5l4-4h8l2 3v10l-3 2H1z" fill="url(#gb)" stroke="#0a5098"/><path d="M7 1h6l3 4v6c-1-5-4-9-9-10z" fill="#d82818"/></symbol>
<symbol id="s6" viewBox="0 0 16 16"><path d="M1 4l3-3h11v11l-3 3H1zM1 4h11v11M12 4l3-3" fill="#c8e4fa" stroke="#0a4c90" stroke-width="1.200"/><path d="M4 7h5v5H4z" fill="#2870b8" stroke="#0a3468" stroke-width="1.500"/></symbol>
<symbol id="s7" viewBox="0 0 16 16"><path d="M7 2l2-1h7v12l-3 2H7z" fill="url(#gb)" stroke="#0a5098"/><circle cx="6" cy="10" r="5" fill="#50a8f0" stroke="#0a5098"/><path d="M6 5v10M1 10h10" stroke="#0a5098" stroke-width=".7"/></symbol>
<symbol id="s8" viewBox="0 0 16 16"><path d="M1 4l3-3h5l5 13-2 1H1z" fill="url(#gb)" stroke="#0a5098"/><path d="M9 1h3l4 11-3 3z" fill="#d82818"/></symbol>
<symbol id="s9" viewBox="0 0 16 16"><path d="M1 10l5-5h10l-3 5z" fill="#3c98e0" stroke="#0a5098"/><path d="M1 10h12l3-5v3l-4 5H1z" fill="#e03c20" stroke="#901c08" stroke-width=".6"/></symbol>
<symbol id="s10" viewBox="0 0 16 16"><path d="M1 4l4-3h10v11l-3 4H1z" fill="#0c4888" stroke="#062c58"/><path d="M3 6h7v7H3z" fill="#1060d0"/><path d="M1 4h11v12M12 4l3-3" stroke="#2c70b4" fill="none"/></symbol>
<symbol id="s11" viewBox="0 0 16 16"><path d="M1 8l2-2h12v8l-2 2H1z" fill="url(#gb)" stroke="#0a5098"/><path d="M7 6l3-5h5v3l-4 5z" fill="#f07838" stroke="#a83c10"/></symbol>
<symbol id="s12" viewBox="0 0 16 16"><path d="M1 4l4-3h10v11l-3 4H1z" fill="#1c5c94" stroke="#0a2c50"/><path d="M1 9.500h11l3-3M6.500 4v12M1 4h11v12M12 4l3-3" stroke="#5cb4f0" fill="none"/></symbol>
<symbol id="s13" viewBox="0 0 16 16"><path d="M1 9l5-2 9 3-6 5z" fill="#f0f6fc" stroke="#4078b0"/><path d="M4 2h8l3 9H6z" fill="url(#gb)"/></symbol>
<symbol id="s14" viewBox="0 0 16 16"><path d="M1.500 1.500h13v13h-13z" fill="#e4f4ff" stroke="#1878b8" stroke-width="2"/><path d="M4 7h4v5H4zM10 4h2v8h-2zM4 5l2-1 2 1" fill="none" stroke="#1878b8"/></symbol>
<symbol id="s15" viewBox="0 0 16 16"><path d="M1.500 1.500h13v13h-13z" fill="#d4ecff" stroke="#2c80c0" stroke-width="2"/><path d="M4 4h3v3H4zM9 4h3v3H9zM4 9h3v3H4zM9 9h3v3H9z" fill="#fff" stroke="#184c88"/></symbol>
<symbol id="s16" viewBox="0 0 16 16"><path d="M1 6l5-5h4v3h5v7l-5 5H1z" fill="#1868c0" stroke="#0a3c78"/><path d="M1 6l5-5h4v3h5v6l-4 3V8l-4 2V6z" fill="#d81c28" stroke="#780810" stroke-width=".6"/></symbol>
</svg>

<header class="titlebar d-flex align-items-center flex-shrink-0 ps-1 pe-1">
  <svg width="15" height="18" viewBox="0 0 16 18" class="me-1" aria-hidden="true"><path d="M0 3h5l3 5 4-7h4L10 9l4 8h-4l-3-5-3 4H0l5-7z" fill="#222" stroke="#dfe6d0" stroke-width=".8"/></svg>
  <h1 class="m-0 me-auto">Mastercam Mill X6 MU1</h1>
  <div class="wins d-flex">
    <button class="winbtn" aria-label="最小化"><svg width="13" height="13"><path d="M2 10h7" stroke="#fff" stroke-width="3"/></svg></button>
    <button class="winbtn" aria-label="还原"><svg width="13" height="13" fill="none" stroke="#fff" stroke-width="1.500"><path d="M2 6h6v5H2zM5 5V2h6v6H9"/></svg></button>
    <button class="winbtn shut" aria-label="关闭"><svg width="13" height="13"><path d="M2 2l9 9M11 2l-9 9" stroke="#fff" stroke-width="2"/></svg></button>
  </div>
</header>

<nav class="flex-shrink-0">
  <ul class="menus list-unstyled d-flex m-0">
    <li><a href="#">文件<span class="en">(<u>F</u>)</span></a></li>
    <li><a href="#">编辑<span class="en">(<u>E</u>)</span></a></li>
    <li><a href="#">视图<span class="en">(<u>V</u>)</span></a></li>
    <li><a href="#">分析<span class="en">(<u>A</u>)</span></a></li>
    <li><a href="#">绘图<span class="en">(<u>C</u>)</span></a></li>
    <li><a href="#">实体<span class="en">(<u>S</u>)</span></a></li>
    <li><a href="#">转换<span class="en">(<u>X</u>)</span></a></li>
    <li><a href="#">机床类型<span class="en">(<u>M</u>)</span></a></li>
    <li><a href="#">刀具路径<span class="en">(<u>T</u>)</span></a></li>
    <li><a href="#">屏幕<span class="en">(<u>R</u>)</span></a></li>
    <li><a href="#" class="en">Moldplus</a></li>
    <li><a href="#">设置<span class="en">(<u>I</u>)</span></a></li>
    <li><a href="#">帮助<span class="en">(<u>H</u>)</span></a></li>
  </ul>
</nav>

<div class="bar d-flex flex-shrink-0" role="toolbar">
  <div class="tgroup" data-tools="new open save print preview config"></div>
  <div class="tgroup" data-tools="undo- redo-"></div>
  <div class="tgroup" data-tools="fit repaint | zwin ztgt zeq | zhalf zout | bin1 bin2 bin3"></div>
  <div class="tgroup" data-tools="cubet cubef cubes cubew"></div>
  <div class="tgroup" data-tools="cuber v"></div>
  <div class="tgroup" data-tools="globe v ball v rbox rboxw"></div>
  <div class="tgroup" data-tools="erase erase2 v | erase3 v"></div>
  <div class="tgroup" data-tools="anlz diff | joint hammer sigma port v"></div>
</div>
<div class="bar d-flex flex-shrink-0" role="toolbar">
  <div class="tgroup" data-tools="plus v line v arc v rect v fillet v spline v cyl v"></div>
  <div class="tgroup" data-tools="trim brk v"></div>
  <div class="tgroup" data-tools="xf1 xf xf2 xf3 xf4 xf5 xf6 xf7 | dyn v arr mov v"></div>
  <div class="tgroup" data-tools="bulb v note"></div>
  <div class="tgroup" data-tools="gridr flow sail swept pocket v | surf1 surf2 box | surf3 v blk v tool v"></div>
</div>
<div class="coords d-flex flex-shrink-0">
  <div class="ribbon d-flex align-items-center">
    <div class="segm"><button class="key" id="kx">X</button><div class="combo off"><input aria-labelledby="kx" value="0.03402"><button class="drop" aria-label="X"><svg><use href="#chev"/></svg></button></div></div>
    <div class="segm"><button class="key" id="ky">Y</button><div class="combo off"><input aria-labelledby="ky" value="-9.43537"><button class="drop" aria-label="Y"><svg><use href="#chev"/></svg></button></div></div>
    <div class="segm"><button class="key" id="kz">Z</button><div class="combo off"><input aria-labelledby="kz" value="0.0"><button class="drop" aria-label="Z"><svg><use href="#chev"/></svg></button></div>
      <div class="seq" data-tools="fast- bang- blot- v-"></div>
      <button class="tb lit" aria-label="帮助"><svg><use href="#help"/></svg></button></div>
    <span class="split"></span>
    <div class="segm"><button class="pick dim me-1">全部<span class="en">...</span></button><button class="pick me-1">单一<span class="en">...</span></button>
      <div class="seq" data-tools="swirl-"></div>
      <div class="combo off"><select aria-label="范围"><option>范围内</option></select><span class="drop"><svg><use href="#chev"/></svg></span></div>
      <div class="seq" data-tools="dsel- v-"></div>
      <div class="seq" data-tools="ptr- hex-"></div>
      <div class="seq" data-tools="hex- hex- hex-"></div>
      <div class="seq" data-tools="cubeg- bend-"></div>
      <div class="seq" data-tools="okp-"></div>
      <div class="seq" data-tools="no- disc-"></div>
      <div class="seq" data-tools="helpg-"></div></div>
  </div>
</div>
<div class="prompt flex-shrink-0"><span class="en">Yuanmeto</span></div>

<main class="stage d-flex flex-grow-1">
  <aside class="rail west">
    <div class="inner" data-rail="s1 s2 s3 s4 s5v | s6 s7v s8 s9 s10 | s11 s12 s13 s14 | s15v s16v"></div>
  </aside>

  <section class="manager position-relative d-flex flex-column">
    <div class="cap d-flex justify-content-end">
      <button class="capbtn" aria-label="菜单"><svg width="7" height="4"><use href="#dn"/></svg></button>
      <button class="capbtn">X</button>
    </div>
    <div class="sheet d-flex flex-column flex-grow-1">
      <div class="strip d-flex align-items-center justify-content-end pe-3" data-tools="clip- | helpg- |"></div>
      <div class="slot"></div>
      <div class="tree d-flex flex-column justify-content-end flex-grow-1">
        <div class="sbar d-flex">
          <button aria-label="左"><svg viewBox="0 0 6 9"><path d="M5 1L1.500 4.500 5 8" fill="none" stroke="currentColor" stroke-width="2"/></svg></button>
          <div class="thumb"><span class="grip"></span></div>
          <button class="ms-auto" aria-label="右"><svg viewBox="0 0 6 9"><path d="M1 1l3.500 3.500L1 8" fill="none" stroke="currentColor" stroke-width="2"/></svg></button>
        </div>
      </div>
    </div>

    <form class="dlg" onsubmit="return false">
      <header class="d-flex justify-content-between align-items-center"><h2>补正选项</h2>
        <button class="x-shut" type="button" aria-label="关闭"><svg width="14" height="14"><path d="M2 2l10 10M12 2L2 12" stroke="#fff" stroke-width="2"/></svg></button></header>
      <div class="modes d-flex">
        <label>移动<input type="radio" name="mode"></label>
        <label>复制<input type="radio" name="mode" checked></label>
      </div>
      <div class="times d-flex align-items-center">
        <label for="cnt"><span>次数</span></label>
        <div class="combo"><input class="yellow" id="cnt" value="1"><div class="spin"><button type="button" aria-label="增"><svg><use href="#up"/></svg></button><button type="button" aria-label="减"><svg><use href="#dn"/></svg></button></div></div>
      </div>
      <div class="off-row d-flex">
        <svg width="24" height="24" viewBox="0 0 24 24" aria-hidden="true"><path d="M0 0h24v24H0z" fill="#bdbcc0"/><path d="M0 12h3v8h2v-6h3v6h2v-6h3v6h2v-6h3v6h2v-8h4v12H0z" fill="url(#gr)"/><path d="M5 4h9V1l6 5-6 5V8H5z" fill="#a8a8bc" stroke="#222"/></svg>
        <div class="combo ms-3 me-auto dist"><input class="yellow" aria-label="距离" value="25.0"><button type="button" class="drop" aria-label="历史"><svg><use href="#chev"/></svg></button></div>
        <div class="combo border-dark dspin"><div class="spin"><button type="button" aria-label="增"><svg><use href="#up"/></svg></button><button type="button" aria-label="减"><svg><use href="#dn"/></svg></button></div></div>
      </div>
      <button type="button" class="push flip" aria-label="方向"><svg width="50" height="20" viewBox="0 0 50 20"><path d="M1 10l8-7v4h16v6H9v4z" fill="#a4a4c4" stroke="#606080"/><path d="M49 10l-8-7v4H25l-5 6h21v4z" fill="#f04818" stroke="#902008"/><path d="M17 19L34 1" stroke="#111" stroke-width="1.500"/></svg></button>
      <fieldset class="fs1"><legend>预览</legend>
        <div class="d-flex align-items-center"><input type="checkbox" aria-label="预览" checked><button type="button" class="push reset">重设</button>
          <label class="d-flex align-items-center ms-auto fitlb"><input type="checkbox"><span>适度化</span></label></div>
      </fieldset>
      <fieldset class="fs2"><legend>属性</legend>
        <label class="d-flex align-items-center"><input type="checkbox"><span class="ps-1">使用新的图素属性</span></label>
      </fieldset>
      <div class="d-flex acts">
        <button class="push" aria-label="确定"><svg width="18" height="20" viewBox="0 0 18 20"><path d="M1 11l4-1 2 4L15 1h2L8 19H6z" fill="#3cc428" stroke="#187010"/></svg></button>
        <button type="button" class="push flat" disabled aria-label="应用"><svg width="24" height="24" viewBox="0 0 24 24"><circle cx="12" cy="12" r="12" fill="#a9a797"/><path d="M12 4v16M4 12h16" stroke="#f4f2e6" stroke-width="5"/></svg></button>
        <button type="button" class="push" aria-label="帮助"><svg width="18" height="20"><use href="#help"/></svg></button>
      </div>
    </form>
  </section>

  <section class="view position-relative flex-grow-1 overflow-hidden">
    <svg class="sketch" aria-label="绘图区" shape-rendering="crispEdges">
      <rect x="168.500" y="54.500" width="298" height="338" fill="none" stroke="#3cc85c"/>
      <path d="M168 54.500h299" stroke="#b8e888"/>
      <path d="M41.500 520v18" stroke="#4cd07c"/><path d="M41 538.500h20" stroke="#d02060"/>
      <text x="38" y="511" fill="#28e858" font-size="10" font-weight="bold">Y</text>
      <text x="67" y="541" fill="#e01830" font-size="10" font-weight="bold">X</text>
    </svg>
    <div class="hint">指定补正方向</div>
    <div class="camera d-flex"><span>屏幕视角:俯视图</span><span><span class="en">WCS:</span>俯视图</span><span>刀具/绘图平面:俯视图</span></div>
    <div class="scalebar"><div class="num">4.908</div><div class="unit">公制</div></div>
  </section>

  <aside class="rail east">
    <div data-rail="fit ztgt dyn erase trimr rectg"></div>
    <hr class="brk">
    <div data-rail="e1- e2- e3- e4- e5- e6- e7- e8- e9- no- | ea- ea- eb- | ec- ec-"></div>
  </aside>
</main>

<footer class="foot d-flex align-items-center flex-shrink-0 position-relative">
  <span class="tip me-auto">帮助, 按 <span class="en">Alt+H</span>。</span>
  <div class="state d-flex">
    <button class="cell en w2d">2D</button>
    <button class="cell wview">屏幕视角</button>
    <button class="cell wplane">平面<span class="en">a</span></button>
    <label class="en wz" for="zz">Z</label>
    <div class="combo wdepth"><input id="zz" class="sel" value="0.0"><span class="yellow flex-grow-1 my-1"></span><button class="drop" aria-label="深度"><svg><use href="#chev"/></svg></button></div>
    <button class="wcol en">10</button>
    <button class="cell wcr" aria-label="颜色"><svg width="9" height="8" viewBox="0 0 9 8"><path d="M0 0h9L4.500 8z"/></svg></button>
    <label class="wlev" for="lev">层别</label>
    <div class="combo wlevel"><input id="lev" value="1"><button class="drop" aria-label="层别"><svg><use href="#chev"/></svg></button></div>
    <button class="cell watt">属性</button>
    <div class="combo wpt"><input aria-label="点型" value="*"><button class="drop" aria-label="点型"><svg><use href="#chev"/></svg></button></div>
    <div class="combo wln"><span class="stroke3"></span><button class="drop" aria-label="线型"><svg><use href="#chev"/></svg></button></div>
    <div class="combo wln"><span class="stroke1"></span><button class="drop" aria-label="线宽"><svg><use href="#chev"/></svg></button></div>
    <button class="cell wwcs en">WCS</button>
    <button class="cell wgrp">群组</button>
    <button class="cell wq2" aria-label="更多"></button>
    <button class="cell wq en">?</button>
  </div>
  <a class="site-url" href="#">三维网www.3dportal.cn</a>
</footer>

<script src="https://cdn.jsdelivr.net/npm/bootstrap@5.3.0/dist/js/bootstrap.bundle.min.js"></script>
<script>
// Tool lists: a name is an icon, a trailing "-" disables it, "v" is a drop-down arrow, "|" a separator.
const tool = t => {
  const off = t.endsWith('-'), id = off ? t.slice(0, -1) : t;
  if (id === '|') return '<span class="sp"></span>';
  if (id === 'v') return `<button class="cr ${off ? 'dis' : ''}" aria-label="v"><svg><use href="#caret"/></svg></button>`;
  return `<button class="tb ${off ? 'dis' : ''}" ${off ? 'disabled' : ''} aria-label="${id}"><svg><use href="#${id}"/></svg></button>`;
};
document.querySelectorAll('[data-tools]').forEach(el => {
  el.innerHTML = el.dataset.tools.split(' ').map(tool).join('');
});
document.querySelectorAll('[data-rail]').forEach(el => {
  el.innerHTML = el.dataset.rail.split(' ').map(t =>
    t === '|' ? '<hr>' : `<div class="run">${t.endsWith('v') ? tool(t.slice(0, -1)) + tool('v') : tool(t)}</div>`).join('');
});
</script>
</body>
</html>
